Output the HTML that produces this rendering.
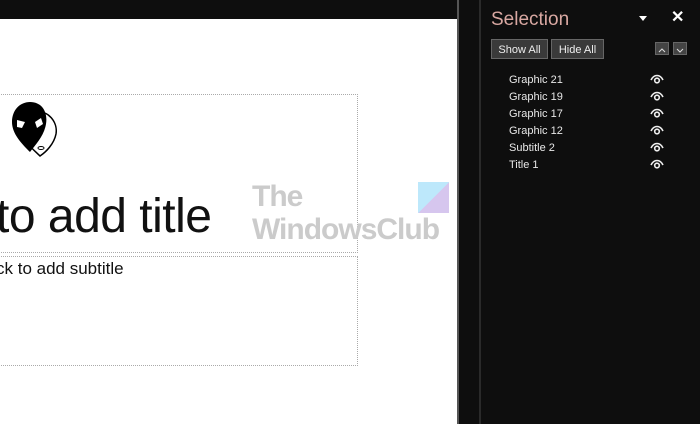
<!DOCTYPE html>
<html><head><style>
body{margin:0;width:700px;height:424px;background:#0e0e0e;position:relative;overflow:hidden;font-family:"Liberation Sans",sans-serif}
.slide{position:absolute;left:0;top:19px;width:457px;height:405px;background:#fff}
.gap{position:absolute;left:457px;top:0;width:2px;height:424px;background:#555}
.div{position:absolute;left:479px;top:0;width:2px;height:424px;background:#2a2a2a}
.box{position:absolute;border:1px dotted #aaa}
.t{position:absolute;color:#111;white-space:nowrap}
.btn{position:absolute;top:39px;height:20px;background:#3a3a3a;border:1px solid #666;color:#eee;font-size:11px;line-height:20px;text-align:center;box-sizing:border-box}
.item{position:absolute;left:509px;color:#e8e8e8;font-size:11px}
.sb{position:absolute;top:42px;width:14px;height:13px;background:#444;border:1px solid #666;box-sizing:border-box}
</style></head><body>
<div class="slide"></div>
<div class="gap"></div>
<div class="div"></div>
<div class="box" style="left:-2px;top:94px;width:358px;height:157px"></div>
<div class="box" style="left:-2px;top:256px;width:358px;height:108px"></div>
<svg style="position:absolute;left:8px;top:100px" width="54" height="60" viewBox="0 0 54 60">
<path d="M28 12 C40 10 50 22 48 34 C46 44 38 52 32 56 C26 50 18 44 16 36 Z" fill="#fff" stroke="#000" stroke-width="1.5"/>
<path d="M22 2 C34 2 40 12 38 24 C36 36 28 44 22 52 C14 44 4 34 4 22 C4 10 12 2 22 2 Z" fill="#000"/>
<path d="M9 20 L17 22 L14 28 L9 27 Z" fill="#fff"/><path d="M33 18 L27 22 L29 28 L35 24 Z" fill="#fff"/>
<ellipse cx="33" cy="48" rx="3" ry="1.5" fill="#fff" stroke="#000"/>
</svg>
<div class="t" style="left:-4px;top:189px;font-size:48px;font-weight:300;color:#111;letter-spacing:-0.5px">to add title</div>
<div class="t" style="left:-4px;top:259px;font-size:17px">ck to add subtitle</div>
<div class="t" style="left:252px;top:180px;font-size:30px;font-weight:bold;color:#cbcbcb;line-height:33px;letter-spacing:-1px">The<br>WindowsClub</div>
<div style="position:absolute;left:418px;top:182px;width:31px;height:31px;background:linear-gradient(135deg,#bde8fb 50%,#d6c6ee 50%)"></div>
<div class="t" style="left:491px;top:9px;font-size:19px;color:#d9a8a2">Selection</div>
<div style="position:absolute;left:639px;top:16px;width:0;height:0;border-left:4px solid transparent;border-right:4px solid transparent;border-top:5px solid #fff"></div>
<div class="t" style="left:671px;top:7px;font-size:16px;color:#fff;font-weight:bold">✕</div>
<div class="btn" style="left:491px;width:57px">Show All</div>
<div class="btn" style="left:551px;width:53px">Hide All</div>
<div class="sb" style="left:655px"><svg width="12" height="11"><path d="M3 7 L6 4 L9 7" stroke="#ddd" fill="none"/></svg></div>
<div class="sb" style="left:673px"><svg width="12" height="11"><path d="M3 4 L6 7 L9 4" stroke="#ddd" fill="none"/></svg></div>
<div class="item" style="top:74px">Graphic 21</div>
<div class="item" style="top:91px">Graphic 19</div>
<div class="item" style="top:108px">Graphic 17</div>
<div class="item" style="top:125px">Graphic 12</div>
<div class="item" style="top:142px">Subtitle 2</div>
<div class="item" style="top:159px">Title 1</div>
<svg style="position:absolute;left:649px;top:72px" width="16" height="102">
<g fill="none" stroke="#eee" stroke-width="1.6">
<g id="e"><path d="M2 8 C5 2 11 2 14 8"/><circle cx="8" cy="8.5" r="2.3"/></g>
<use href="#e" y="17"/><use href="#e" y="34"/><use href="#e" y="51"/><use href="#e" y="68"/><use href="#e" y="85"/>
</g></svg>
</body></html>
